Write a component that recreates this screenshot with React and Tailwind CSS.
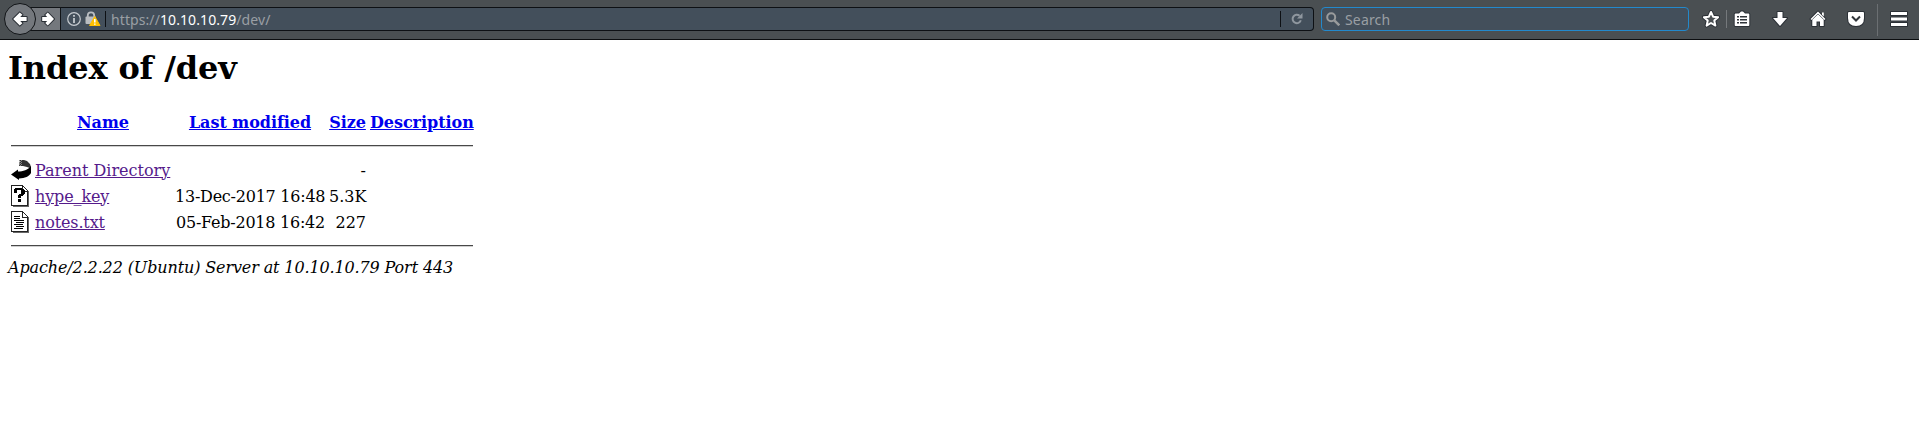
import React from "react";

function BackIcon() {
  return (
    <svg width="20" height="22" viewBox="0 0 20 22" className="block">
      <path d="M9 1h4l3 1 3 3 1 3v1.500L16 8l-4-1H8z" fill="#333" />
      <path d="M8 1h1v1H8zM10 1h1v1h-1zM9 2h1v1H9zM8 3h1v1H8zM10 3h1v1h-1zM9 4h1v1H9zM8 5h1v1H8zM10 5h1v1h-1zM9 6h1v1H9z" fill="#888" />
      <path d="M0 15.500L7 10.500V12.500c5 0 10-1.500 13-5.500v7c-2 3.500-6 5.300-12 5.500V21z" fill="#000" />
    </svg>
  );
}

function PageFrame({ children }) {
  return (
    <svg width="20" height="22" viewBox="0 0 20 22" shapeRendering="crispEdges" className="block">
      <path d="M0 0h12v1h1v1h1v1h1v1h1v1h1v16H0z" fill="#222" />
      <path d="M1 1h10v6h5v13H1z" fill="#fff" />
      <path d="M12 2h1v1h1v1h1v1h1v1h-4z" fill="#fff" />
      <path d="M17 6h1v16H2v-1h15z" fill="#666" />
      {children}
    </svg>
  );
}

function UnknownIcon() {
  return (
    <PageFrame>
      <path d="M3 4h1V3h7v1h2v1h1v4h-1v1h-1v1h-2v2H7v-3h1V9h2V5H6v3H3zM7 14h3v3H7z" fill="#000" />
    </PageFrame>
  );
}

function TextIcon() {
  return (
    <PageFrame>
      <path d="M3 5h6v1H3zM3 7h6v1H3zM3 9h10v1H3zM5 11h8v1H5zM3 13h9v1H3zM5 15h8v1H5zM3 17h9v1H3z" fill="#000" />
    </PageFrame>
  );
}

const outline = { stroke: "#2b3036", strokeWidth: 2, paintOrder: "stroke", strokeLinejoin: "round" };

function BackArrow() {
  return (
    <svg width="16" height="18" viewBox="0 0 16 18" className="block">
      <path d="M1.200 9l6.600-6.600 2.600 2.400L8.200 7H14.600v4H8.200l2.200 2.200-2.600 2.400z" fill="#fff" {...outline} />
    </svg>
  );
}

function ForwardArrow() {
  return (
    <svg width="14" height="18" viewBox="0 0 14 18" className="block">
      <path d="M13 9L6.800 2.600 4.300 5 6.200 7H1.200v4h5l-1.900 2 2.500 2.400z" fill="#fff" {...outline} />
    </svg>
  );
}

function Toolbar() {
  return (
    <header className="flex h-10 items-start border-b border-[#0c0e10] bg-[#4a4f52] font-['Noto_Sans',sans-serif] text-[14px]">
      <div className="relative z-10 ml-1 mt-[3px] flex size-8 shrink-0 items-center justify-center rounded-full border border-[#111417] bg-[#74787d]">
        <BackArrow />
      </div>
      <div className="-ml-3 mt-[7px] flex h-6 w-[37px] shrink-0 items-center justify-end border-y border-r border-[#111417] bg-[#74787d] pr-[5px]">
        <ForwardArrow />
      </div>
      <div className="mt-[7px] flex h-6 w-[1253px] shrink-0 items-center rounded-r-sm border-y border-r border-[#0d1014] bg-[#434f5b]">
        <svg width="14" height="14" viewBox="0 0 14 14" className="ml-1.5 block">
          <circle cx="7" cy="7" r="6.300" fill="none" stroke="#c5cacf" strokeWidth="1.200" />
          <path d="M6.100 3h1.800v1.800H6.100zM6.100 6h1.800v5H6.100z" fill="#c5cacf" />
        </svg>
        <svg width="16" height="16" viewBox="0 0 16 16" className="ml-1 block">
          <path d="M2.800 6V4.500a3.200 3.200 0 016.400 0V6" fill="none" stroke="#b9bdc1" strokeWidth="1.800" />
          <rect x="0.500" y="5.500" width="10.500" height="7.500" rx="1" fill="#b9bdc1" />
          <path d="M9.800 5.500l5.200 9H4.600z" fill="#ffbf00" stroke="#ffbf00" strokeLinejoin="round" />
          <path d="M9 8h1.600v3.500H9zM9 12.400h1.600v1.400H9z" fill="#fff" />
        </svg>
        <div className="ml-1 h-4 w-px bg-[#0d1014]" />
        <div className="ml-[5px] flex-1 whitespace-nowrap pt-0.5 leading-5 tracking-[0.09px] text-[#9a9fa4]">
          https://<span className="text-white">10.10.10.79</span>/dev/
        </div>
        <div className="h-4 w-px bg-[#0d1014]" />
        <svg width="12" height="12" viewBox="0 0 12 12" className="ml-2.5 mr-[10px] block">
          <path d="M9.800 7.300A4.200 4.200 0 118.600 2.800" fill="none" stroke="#8f979f" strokeWidth="2" />
          <path d="M11.500 0v5.500H6z" fill="#8f979f" />
        </svg>
      </div>
      <div className="ml-[7px] mt-[7px] flex h-6 w-[368px] shrink-0 items-center rounded-sm border border-[#2389cc] bg-[#434f5b]">
        <svg width="14" height="14" viewBox="0 0 14 14" className="ml-1 block" fill="none" stroke="#999b9c">
          <circle cx="5.200" cy="5.200" r="4" strokeWidth="2" />
          <path d="M8.300 8.300l5 5" strokeWidth="2.500" />
        </svg>
        <span className="ml-[5px] pt-0.5 leading-5 tracking-[0.15px] text-[#9a9fa4]">Search</span>
      </div>
      <svg width="18" height="18" viewBox="0 0 18 18" className="ml-[13px] mt-[10px] block shrink-0">
        <path d="M9 2l2.100 4.700 5 .5-3.800 3.400 1.100 5L9 13l-4.400 2.600 1.100-5L1.900 7.200l5-.5z" fill="none" stroke="#2b3036" strokeWidth="4" strokeLinejoin="round" />
        <path d="M9 2l2.100 4.700 5 .5-3.800 3.400 1.100 5L9 13l-4.400 2.600 1.100-5L1.900 7.200l5-.5z" fill="#4a4f52" stroke="#fff" strokeWidth="2" strokeLinejoin="round" />
      </svg>
      <div className="ml-[6px] mt-[10px] h-[18px] w-px shrink-0 bg-[#75797c]" />
      <svg width="18" height="18" viewBox="0 0 18 18" className="ml-[6px] mt-[10px] block shrink-0">
        <path d="M2.500 3.500h3.500L8 1.500h2l2 2h3.500q.8 0 .8.800v11q0 .8-.8.800h-13q-.8 0-.8-.8v-11q0-.8.8-.8z" fill="#fff" {...outline} />
        <path d="M4 6h2v1.500H4zM7 6h7v1.500H7zM4 9h2v1.500H4zM7 9h7v1.500H7zM4 12h2v1.500H4zM7 12h7v1.500H7z" fill="#30353a" />
      </svg>
      <svg width="18" height="18" viewBox="0 0 18 18" className="ml-5 mt-[10px] block shrink-0">
        <path d="M6.500 2h5v6H16l-7 8-7-8h4.500z" fill="#fff" {...outline} />
      </svg>
      <svg width="18" height="18" viewBox="0 0 18 18" className="ml-5 mt-[10px] block shrink-0">
        <path d="M9 1.500l7.500 7.500-1 1-.8-.8V16h-3.700v-4.500H7.500V16H3.300V9.200l-.8.8-1-1z" fill="#fff" {...outline} />
        <path d="M13 2.500h1.800v4L13 4.700z" fill="#fff" />
        <path d="M3.300 9.500L9 4l5.700 5.500" fill="none" stroke="#777d82" />
      </svg>
      <svg width="18" height="18" viewBox="0 0 18 18" className="ml-5 mt-[10px] block shrink-0">
        <path d="M2 2h14q1 0 1 1v5q0 8-8 8T1 8V3q0-1 1-1z" fill="#fff" {...outline} />
        <path d="M5 6.500l4 4 4-4" fill="none" stroke="#30353a" strokeWidth="2" />
      </svg>
      <div className="ml-3 mt-1 h-8 w-px shrink-0 bg-[#6b6f72]" />
      <svg width="18" height="18" viewBox="0 0 18 18" className="ml-3 mt-[10px] block shrink-0">
        <path d="M1 2h16v3H1zM1 7.500h16v3H1zM1 13h16v3H1z" fill="#fff" {...outline} />
      </svg>
    </header>
  );
}

function Rule() {
  return (
    <tr>
      <th colSpan={5} className="h-5 p-px">
        <div className="h-[2px] border-b border-t border-b-[#d0d0d0] border-t-[#484848]" />
      </th>
    </tr>
  );
}

const columns = [
  { label: "Name", width: "w-[138px]" },
  { label: "Last modified", width: "w-[152px]" },
  { label: "Size", width: "w-[39px]" },
  { label: "Description", width: "w-[105px]" },
];

const files = [
  { Icon: BackIcon, name: "Parent Directory", date: "", size: "-" },
  { Icon: UnknownIcon, name: "hype_key", date: "13-Dec-2017 16:48", size: "5.3K" },
  { Icon: TextIcon, name: "notes.txt", date: "05-Feb-2018 16:42", size: "227" },
];

export default function App() {
  return (
    <div className="h-[437px] overflow-hidden bg-white text-black">
      <Toolbar />
      <main className="px-2 pt-[10px] font-['DejaVu_Serif',serif] text-[16px] leading-[19px]">
        <h1 className="mb-[21px] text-[32px] font-bold leading-[37px] tracking-[-0.13px]">Index of /dev</h1>
        <table className="w-[468px] table-fixed border-separate border-spacing-[2px] whitespace-nowrap">
          <tbody>
            <tr className="h-6 text-[#0000ee]">
              <th className="w-[22px] p-px"><div className="w-5" /></th>
              {columns.map(({ label, width }) => (
                <th key={label} className={`${width} p-px font-bold underline tracking-[-0.05px]`}>{label}</th>
              ))}
            </tr>
            <Rule />
            {files.map(({ Icon, name, date, size }, row) => (
              <tr key={name} className="h-6">
                <td className="p-px"><Icon /></td>
                <td className={`p-px text-[#551a8b] underline ${row > 0 ? "tracking-[-0.13px]" : ""}`}>{name}</td>
                <td className="p-px text-right tracking-[-0.24px]">{date}</td>
                <td className="p-px text-right">{size}</td>
                <td className="p-px" />
              </tr>
            ))}
            <Rule />
          </tbody>
        </table>
        <address className="italic tracking-[-0.125px]">Apache/2.2.22 (Ubuntu) Server at 10.10.10.79 Port 443</address>
      </main>
    </div>
  );
}
